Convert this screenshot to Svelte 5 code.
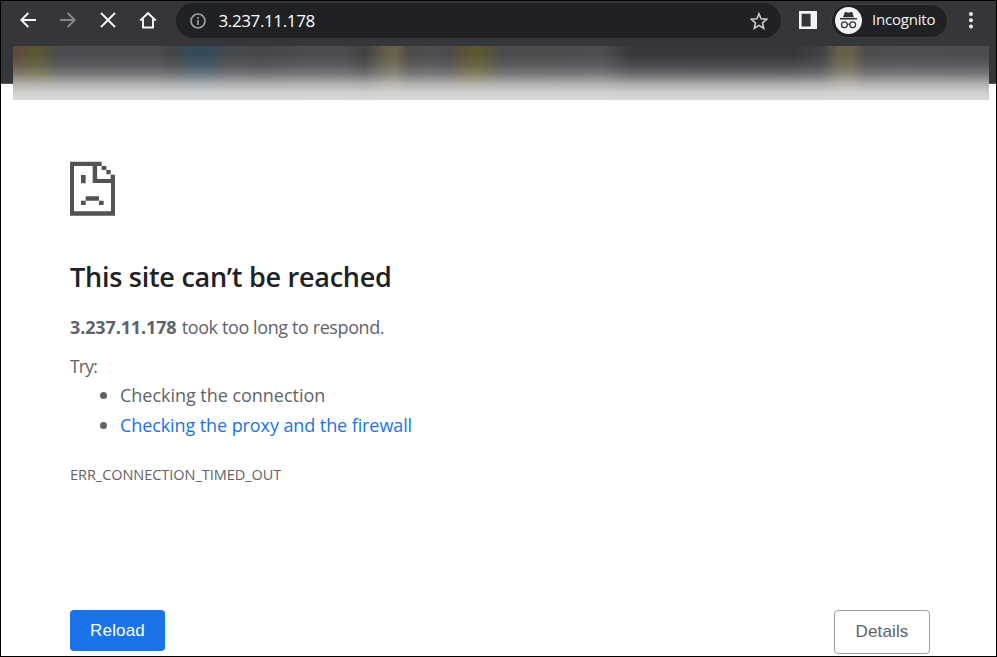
<script>
  const tips = [
    { text: 'Checking the connection', link: false },
    { text: 'Checking the proxy and the firewall', link: true },
  ];
</script>

<div class="window">
  <header>
    <nav class="toolbar">
      <svg class="icon back" width="16" height="16" viewBox="0 0 16 16"><path d="M16 8H1.5M8.3 1 1.3 8l7 7" /></svg>
      <svg class="icon forward" width="16" height="16" viewBox="0 0 16 16"><path d="M0 8h14.5M7.7 1l7 7-7 7" /></svg>
      <svg class="icon stop" width="16" height="16" viewBox="0 0 16 16"><path d="M1 1l14 14M15 1 1 15" /></svg>
      <svg class="icon home" width="18" height="18" viewBox="0 0 18 18"><path d="M1.2 9.5 9 2.2l7.8 7.3M4 8v8.5h10V8" /></svg>
      <div class="omnibox">
        <svg class="info" width="16" height="16" viewBox="0 0 16 16"><circle cx="8" cy="8" r="7" /><path d="M8 7v5M8 4v1.8" /></svg>
        <span class="url">3.237.11.178</span>
        <svg class="star" width="18" height="18" viewBox="0 0 18 18"><path d="M9 1.8l2.1 5 5.5.5-4.1 3.6 1.2 5.4L9 13.4l-4.7 2.9 1.2-5.4-4.1-3.6 5.5-.5z" /></svg>
      </div>
      <svg class="panel" width="18" height="18" viewBox="0 0 18 18"><path fill="#f1f3f4" fill-rule="evenodd" d="M0 0h18v18H0zM2.6 2.8v12.6h9V2.8z" /></svg>
      <div class="profile">
        <svg width="27" height="27" viewBox="0 0 27 27">
          <circle cx="13.5" cy="13.5" r="13.5" fill="#f1f3f4" />
          <path fill="#303135" d="M9.6 5.6q.3-.8 1-.6l2.9.7 2.9-.7q.7-.2 1 .6l1.5 4.7H8.1zM5 11.1h17v1.5H5z" />
          <g fill="none" stroke="#303135" stroke-width="1.2"><circle cx="9.4" cy="17.7" r="2.9" /><circle cx="17.7" cy="17.7" r="2.9" /><path d="M12.2 17.4q1.3-.8 2.7 0" /></g>
        </svg>
        <span>Incognito</span>
      </div>
      <svg class="menu" width="4" height="18" viewBox="0 0 4 18"><circle cx="2" cy="2.9" r="2" /><circle cx="2" cy="9.2" r="2" /><circle cx="2" cy="15.5" r="2" /></svg>
    </nav>
    <div class="bookmarks"></div>
  </header>

  <main>
    <svg class="sad" width="45" height="55" viewBox="0 0 135 165" fill="#535353">
      <path d="M0 2h95v13H82v26h53v123H0zM12 15v136h111V66H68V15zM82 41v12h41V41z" fill-rule="evenodd" />
      <path fill="#fff" d="M82 15h53v26h-12v12H82z" />
      <path d="M95 15h14v12H95zM109 27h13v13h-13zM122 41h13v13h-13zM33 42h14v25H33zM47 106h40v13H47zM33 119h14v13H33zM87 119h14v13H87z" />
    </svg>
    <h1>This site can’t be reached</h1>
    <p class="reason"><strong>3.237.11.178</strong> <span>took too long to respond.</span></p>
    <p class="try">Try:</p>
    <ul>
      {#each tips as tip}
        <li>{#if tip.link}<a href="#proxy">{tip.text}</a>{:else}<span>{tip.text}</span>{/if}</li>
      {/each}
    </ul>
    <p class="code">ERR_CONNECTION_TIMED_OUT</p>
    <div class="actions">
      <button class="reload">Reload</button>
      <button class="details">Details</button>
    </div>
  </main>
</div>

<style>
  :global(body) { margin: 0; }
  .window {
    box-sizing: border-box; width: 997px; height: 657px; overflow: hidden;
    border: 1px solid #000; background: #fff; color: #5f6368;
    font-family: "Open Sans", "Noto Sans", sans-serif;
  }
  header {
    position: relative; box-sizing: border-box; height: 83px;
    background: #35363a; border-bottom: 1px solid #56575a;
  }
  .toolbar { display: flex; align-items: center; height: 38px; padding-left: 19px; }
  .icon { fill: none; stroke: #f1f3f4; stroke-width: 2; flex: none; margin-right: 24px; }
  .forward { stroke: #85868a; }
  .home { margin: 0 19px 0 -1px; }
  .omnibox {
    box-sizing: border-box; display: flex; align-items: center; flex: none;
    width: 605px; height: 35px; padding: 0 13.5px 0 14px; border-radius: 18px;
    background: #202124; margin-top: 1px;
  }
  .info { fill: none; stroke: #9aa0a6; stroke-width: 1.7; }
  .url { margin-left: 12.5px; color: #fff; font-size: 17px; line-height: 24px; letter-spacing: -0.38px; }
  .star { margin-left: auto; fill: none; stroke: #c8cacd; stroke-width: 1.6; }
  .panel { margin-left: 18px; flex: none; }
  .profile {
    box-sizing: border-box; display: flex; align-items: center; flex: none;
    width: 117px; height: 34px; margin: 1px 0 0 14px; padding-left: 3px;
    border: 1px solid #3e3f43; border-radius: 17px; background: #202124;
  }
  .profile svg { flex: none; }
  .profile span { margin: -3px 0 0 10px; color: #f1f3f4; font-size: 15px; line-height: 22px; letter-spacing: -0.2px; }
  .menu { margin-left: 21px; fill: #f1f3f4; flex: none; }
  .bookmarks {
    position: absolute; left: 12px; top: 45px; width: 976px; height: 54px;
    background:
      linear-gradient(to bottom, rgba(217,217,217,0) 15%, rgba(217,217,217,.12) 36%, rgba(217,217,217,.32) 52%, rgba(217,217,217,.7) 70%, rgba(217,217,217,.92) 85%, #d9d9d9 100%),
      linear-gradient(to right, #5c493f 0, #5b5634 20px, #565533 29px, #4a4b4d 45px, #4b4b4f 145px, #424346 160px, #3a4852 175px, #314a5b 187px, #374953 201px, #48484c 218px, #444548 250px, #4c4c50 300px, #4b4b4f 330px, #414142 352px, #5e5849 369px, #6a624d 382px, #4b4b48 397px, #4e4e52 415px, #4a4a4f 435px, #5c5038 450px, #5c5930 464px, #555535 474px, #4a4b4c 489px, #4d4d51 590px, #38383c 618px, #36373b 780px, #414145 809px, #645d48 825px, #68604a 838px, #4c4b4d 854px, #4e4e52 890px, #4b4b4f 976px);
  }
  main { padding: 77px 66px 0 69px; }
  .sad { display: block; }
  h1 { margin: 41px 0 0; height: 40px; line-height: 40px; color: #202124; font-size: 27px; font-weight: 600; letter-spacing: -0.26px; white-space: nowrap; }
  p { margin: 0; white-space: nowrap; }
  .reason { margin-top: 15px; font-size: 18px; line-height: 30px; letter-spacing: -0.4px; }
  .reason strong { margin-right: 1px; font-weight: 700; letter-spacing: -0.13px; }
  .try { margin-top: 9px; font-size: 17.5px; line-height: 30px; letter-spacing: -0.8px; }
  ul { margin: -1px 0 0; padding: 0 0 0 50px; list-style: none; font-size: 18px; line-height: 30px; letter-spacing: -0.09px; }
  li { display: flex; align-items: center; margin-left: -20px; }
  li::before { content: ""; width: 7px; height: 7px; margin-right: 13px; border-radius: 50%; background: #5f6368; }
  li span { letter-spacing: -0.03px; }
  a { color: #1a73e8; text-decoration: none; }
  .code { margin-top: 22px; font-size: 14.5px; line-height: 26px; letter-spacing: -0.04px; }
  .actions { display: flex; justify-content: space-between; align-items: flex-start; margin-top: 122px; }
  button { box-sizing: border-box; padding: 0; border-radius: 4px; font: 17px/20px "Liberation Sans", Arial, sans-serif; }
  .reload { width: 95px; height: 41px; border: 0; background: #1a73e8; color: #fff; letter-spacing: 0.15px; }
  .details { width: 96px; height: 44px; border: 1px solid #9aa0a6; background: #fff; color: #5f6368; letter-spacing: 0.15px; }
</style>
